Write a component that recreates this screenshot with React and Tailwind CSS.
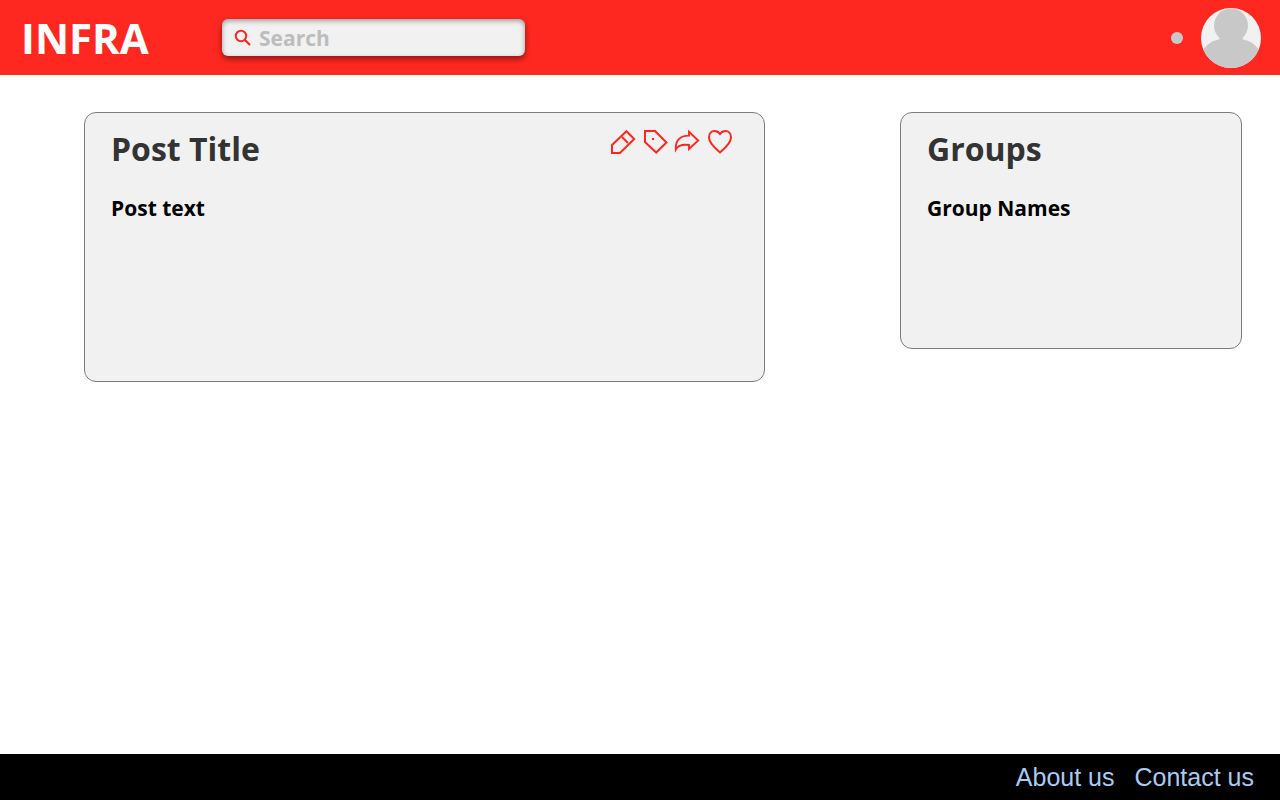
function IconButton({ label, children }) {
  return (
    <button type="button" aria-label={label} className="h-6 w-6 cursor-pointer">
      <svg
        viewBox="0 0 24 24"
        className="block h-6 w-6 overflow-visible"
        fill="none"
        stroke="#ff2821"
        strokeWidth="2"
        strokeMiterlimit="10"
        aria-hidden="true"
      >
        {children}
      </svg>
    </button>
  );
}

function Header() {
  return (
    <header className="flex h-[75px] items-center justify-between bg-[#ff2821] pr-[19px] pl-[21px]">
      <div className="flex items-center">
        <a href="#home" className="w-[201px] text-[42px] leading-[56px] font-bold text-white">
          INFRA
        </a>
        <label className="flex h-[37px] w-[303px] items-center gap-2 rounded-[6px] bg-[#f1f1f1] pl-3 shadow-[inset_0_2px_5px_rgba(0,0,0,0.35),0_3px_6px_rgba(0,0,0,0.45)]">
          <svg
            viewBox="0 0 17 17"
            className="h-[17px] w-[17px] shrink-0"
            fill="none"
            stroke="#ff2821"
            strokeWidth="2"
            aria-hidden="true"
          >
            <circle cx="7" cy="7" r="5.200" />
            <path d="M10.5 10.5 16 16" strokeWidth="2.2" />
          </svg>
          <input
            type="search"
            aria-label="Search"
            placeholder="Search"
            className="h-full w-full min-w-0 bg-transparent text-[21px] font-bold text-[#333333] outline-none placeholder:text-[#bdbdbd]"
          />
        </label>
      </div>
      <div className="flex items-center gap-[18px]">
        <span className="h-3 w-3 rounded-full bg-[#c8c8c8]" />
        <button type="button" aria-label="Profile" className="h-[60px] w-[60px] overflow-hidden rounded-full bg-[#f1f1f1]">
          <svg viewBox="0 0 60 60" className="block h-[60px] w-[60px]" fill="#c8c8c8" aria-hidden="true">
            <circle cx="30" cy="17.5" r="17" />
            <path d="M0 45C5 37 10 33 18 31.500L20 28H40L42 31.500C50 33 55 37 60 45V60H0Z" />
          </svg>
        </button>
      </div>
    </header>
  );
}

function Card({ title, text, className, children }) {
  return (
    <section className={`rounded-[12px] border border-[#7d7d7d] bg-[#f1f1f1] pt-4 pr-8 pl-[26px] ${className}`}>
      <div className="flex items-start justify-between">
        <h2 className="text-[32px] leading-10 font-bold text-[#333333]">{title}</h2>
        {children}
      </div>
      <p className="mt-[25px] text-[21px] leading-7 font-bold text-black">{text}</p>
    </section>
  );
}

export default function App() {
  return (
    <div className="flex min-h-screen flex-col bg-white font-['Open_Sans','Noto_Sans',sans-serif]">
      <Header />
      <main className="grid grow grid-cols-[1fr_342px] items-start gap-[135px] pt-[37px] pr-[38px] pb-8 pl-[84px]">
        <Card title="Post Title" text="Post text" className="min-h-[270px]">
          <div className="flex gap-2 pt-px">
            <IconButton label="Edit">
              <path d="M0 15 14.500 1.200 22.200 9 8 23H0Z" />
              <path d="M10 7 16 13" />
            </IconButton>
            <IconButton label="Tag">
              <path d="M1 1H11L22.500 12.500 12.200 22.500 1 12Z" />
              <path d="M8 9h2" />
            </IconButton>
            <IconButton label="Share">
              <path
                d="M13 5.600V1.800L22.200 10.500 13 19V15C7 14.300 2 15.500 -.2 19.500 -.8 11 3.500 5.600 13 5.600Z"
                strokeWidth="1.9"
              />
            </IconButton>
            <IconButton label="Like">
              <path d="M12 22.500C8 19 1 13.500 1 7.500 1 3.500 3.500 1 6.500 1 9 1 11 2.500 12 4 13 2.500 15 1 17.500 1 20.500 1 23 3.500 23 7.500 23 13.500 16 19 12 22.500Z" />
            </IconButton>
          </div>
        </Card>
        <Card title="Groups" text="Group Names" className="min-h-[237px]" />
      </main>
      <footer className="flex h-[46px] items-center justify-end gap-5 bg-black pt-0.5 pr-[26px] font-['Liberation_Sans',Arial,sans-serif] text-[25px] text-[#aacbf0]">
        <a href="#about">About us</a>
        <a href="#contact">Contact us</a>
      </footer>
    </div>
  );
}
